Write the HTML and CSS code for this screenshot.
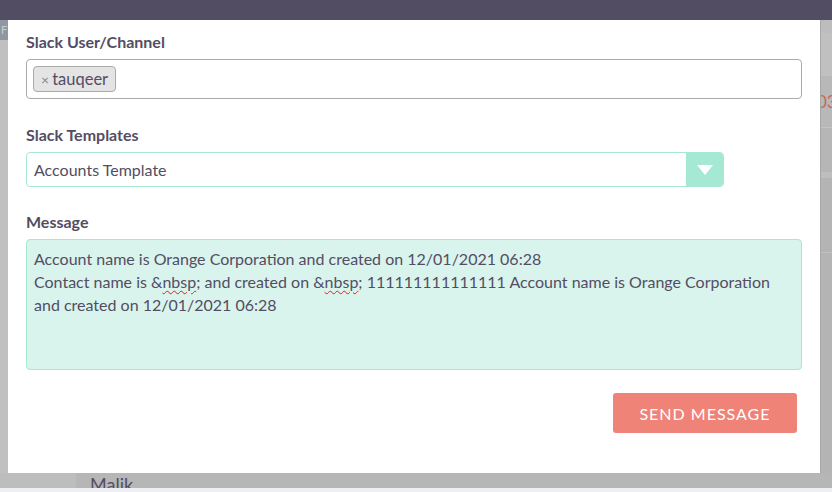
FILE: index.html
```html
<!DOCTYPE html>
<html>
<head>
<meta charset="utf-8">
<link rel="stylesheet" href="styles.css">
</head>
<body>
<div class="topbar"></div>
<div class="middle">
  <div class="leftstrip"><div class="lefttop">F</div></div>
  <div class="modal">
    <div class="field">
      <label class="label">Slack User/Channel</label>
      <div class="tagbox"><span class="tag"><span class="x">×</span>tauqeer</span></div>
    </div>
    <div class="field">
      <label class="label">Slack Templates</label>
      <div class="select">
        <span class="selval">Accounts Template</span>
        <span class="selbtn"><svg width="16" height="10" viewBox="0 0 16 10"><path d="M0 0 H16 L8 10 Z" fill="#fff"/></svg></span>
      </div>
    </div>
    <div class="field">
      <label class="label">Message</label>
      <div class="textarea">Account name is Orange Corporation and created on 12/01/2021 06:28<br>Contact name is &amp;<span class="sp">nbsp</span>; and created on &amp;<span class="sp">nbsp</span>; 111111111111111 Account name is Orange Corporation<br>and created on 12/01/2021 06:28</div>
    </div>
    <div class="actions"><button class="send">SEND MESSAGE</button></div>
  </div>
  <div class="rightstrip">
    <div class="r1"></div><div class="r2"></div><div class="r3">03</div><div class="r4"></div><div class="r5"></div><div class="r6"></div>
  </div>
</div>
<div class="bottom">
  <div class="bleft"></div>
  <div class="bname">Malik</div>
</div>
<div class="bottom2"></div>
</body>
</html>
```
FILE: styles.css
```css
* { box-sizing: border-box; }
html, body { margin: 0; padding: 0; }
body {
  width: 832px;
  height: 492px;
  overflow: hidden;
  background: #b6b6b6;
  font-family: Lato, "Open Sans", sans-serif;
  color: #534d64;
}
.topbar { height: 20px; background: #534d64; }
.middle { display: flex; height: 453px; }
.leftstrip { width: 8px; background: #c0c0c0; }
.lefttop { height: 20px; background: #9097a0; color: #c8cdd2; font-size: 11px; line-height: 20px; overflow: hidden; text-indent: 1px; }
.modal {
  width: 812px;
  background: #fff;
  padding: 11px 18px 0 18px;
  display: flex;
  flex-direction: column;
}
.field { display: flex; flex-direction: column; }
.label {
  font-weight: bold;
  font-size: 16px;
  line-height: 21px;
  margin-bottom: 7px;
}
.tagbox {
  height: 40px;
  border: 1px solid #aaa;
  border-radius: 4px;
  padding: 6px 6px;
  display: flex;
  align-items: flex-start;
  margin-bottom: 25px;
}
.tag {
  display: inline-flex;
  align-items: center;
  height: 26px;
  padding: 0 7px 0 7px;
  background: #e4e4e4;
  border: 1px solid #aaa;
  border-radius: 4px;
  font-size: 16.5px;
  color: #534d64;
}
.tag .x { color: #888; font-size: 14px; margin-right: 3px; }
.select {
  width: 698px;
  height: 35px;
  border: 1px solid #a5e8d4;
  border-radius: 4px;
  display: flex;
  align-items: center;
  margin-bottom: 24px;
  overflow: hidden;
}
.selval { flex: 1; padding-left: 7px; font-size: 16px; }
.selbtn {
  width: 37px;
  height: 100%;
  background: #a5e8d4;
  display: flex;
  align-items: center;
  justify-content: center;
}
.textarea {
  height: 131px;
  background: #d9f4ec;
  border: 1px solid #a5e8d4;
  border-radius: 4px;
  padding: 7px 7px;
  font-size: 16px;
  line-height: 23px;
}
.sp { text-decoration: underline wavy #e02020; text-decoration-thickness: 1px; text-underline-offset: 2px; }
.actions { display: flex; justify-content: flex-end; padding-top: 23px; padding-right: 5px; }
.send {
  width: 184px;
  height: 40px;
  background: #f08377;
  border: none;
  border-radius: 3px;
  color: #fff;
  font-family: Lato, sans-serif;
  font-size: 16px;
  letter-spacing: 1px;
}
.rightstrip { width: 12px; border-left: 1px solid #a8a8a8; display: flex; flex-direction: column; }
.r1 { height: 13px; background: #bdbdbd; }
.r2 { height: 43px; background: #c0c0c0; }
.r3 { height: 52px; background: #b8b8b8; color: #c8665c; font-size: 17px; line-height: 52px; text-indent: -4px; overflow: hidden; border-bottom: 1px solid #c4c4c4; }
.r4 { height: 50px; background: #b6b6b6; border-bottom: 6px solid #bebebe; }
.r5 { height: 75px; background: #b4b4b4; border-bottom: 1px solid #c0c0c0; }
.r6 { flex: 1; background: #b4b4b4; }
.bottom { height: 15px; display: flex; background: #b6b6b6; overflow: hidden; }
.bleft { width: 76px; background: #bdbdbd; }
.bname { padding-left: 14px; font-size: 18px; line-height: 22px; color: #534d64; }
.bottom2 { height: 4px; background: #eeeff3; }
```
